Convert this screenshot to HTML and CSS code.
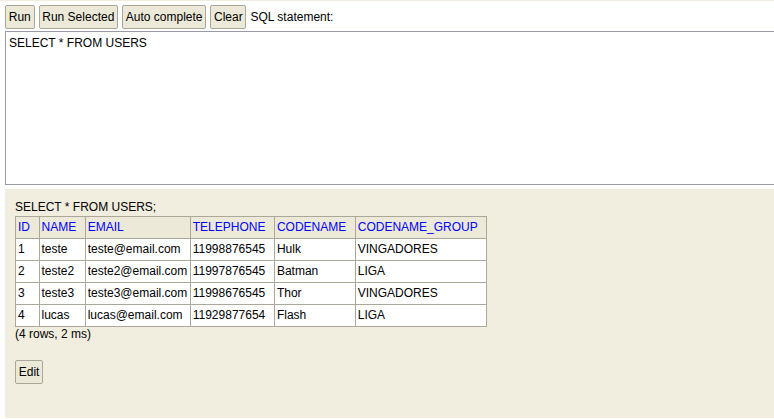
FILE: index.html
```html
<!DOCTYPE html>
<html>
<head>
<meta charset="utf-8">
<link rel="stylesheet" href="styles.css">
</head>
<body>
<div class="query">
  <div class="toolbar">
    <button class="btn">Run</button>
    <button class="btn">Run Selected</button>
    <button class="btn">Auto complete</button>
    <button class="btn">Clear</button>
    <span class="label">SQL statement:</span>
  </div>
  <textarea class="sql">SELECT * FROM USERS</textarea>
</div>
<div class="result">
  <div class="stmt">SELECT * FROM USERS;</div>
  <table class="grid">
    <tr><th><a>ID</a></th><th><a>NAME</a></th><th><a>EMAIL</a></th><th><a>TELEPHONE</a></th><th><a>CODENAME</a></th><th><a>CODENAME_GROUP</a></th></tr>
    <tr><td>1</td><td>teste</td><td>teste@email.com</td><td>11998876545</td><td>Hulk</td><td>VINGADORES</td></tr>
    <tr><td>2</td><td>teste2</td><td>teste2@email.com</td><td>11997876545</td><td>Batman</td><td>LIGA</td></tr>
    <tr><td>3</td><td>teste3</td><td>teste3@email.com</td><td>11998676545</td><td>Thor</td><td>VINGADORES</td></tr>
    <tr><td>4</td><td>lucas</td><td>lucas@email.com</td><td>11929877654</td><td>Flash</td><td>LIGA</td></tr>
  </table>
  <div class="count">(4 rows, 2 ms)</div>
  <button class="btn edit">Edit</button>
</div>
</body>
</html>
```
FILE: styles.css
```css
html, body {
  margin: 0;
  padding: 0;
  background: #fff;
  overflow: hidden;
  width: 774px;
  height: 419px;
}
body {
  font-family: "Liberation Sans", Arial, sans-serif;
  font-size: 12px;
  color: #000;
}
.query {
  border-top: 1px solid #f1eedf;
  padding: 4px 0 0 5px;
}
.toolbar {
  display: flex;
  align-items: center;
  gap: 4px;
  height: 24px;
}
.btn {
  font-family: "Liberation Sans", Arial, sans-serif;
  font-size: 12px;
  color: #000;
  height: 24px;
  padding: 0 2.75px;
  margin: 0;
  background: #ece9d8;
  border: 1px solid #a9a79a;
  border-radius: 2px;
}
.label {
  margin-left: 0;
}
.sql {
  display: block;
  box-sizing: border-box;
  margin: 2px 0 0 0;
  width: 771px;
  height: 154px;
  padding: 3px;
  border: 1px solid #9a99a6;
  font-family: "Liberation Sans", Arial, sans-serif;
  font-size: 12px;
  line-height: 16px;
  resize: none;
  outline: none;
}
.result {
  margin: 4px 0 0 5px;
  height: 229px;
  box-sizing: border-box;
  background: #f1eedf;
  padding: 10px 10px 0 10px;
}
.stmt {
  line-height: 16px;
  height: 17px;
}
.grid {
  border-collapse: collapse;
  background: #fff;
  border: 1px solid #aca899;
}
.grid th, .grid td {
  border: 1px solid #aca899;
  text-align: left;
  white-space: nowrap;
  line-height: 15px;
  font-weight: normal;
}
.grid th {
  background: #ece9d8;
  padding: 3px 8.5px 3px 2px;
}
.grid th a {
  color: #0000ff;
}
.grid td {
  background: #fff;
  padding: 3px 2.5px 3px 2px;
}
.count {
  line-height: 16px;
  margin-top: -1px;
}
.edit {
  display: block;
  margin-top: 18px;
}
```
